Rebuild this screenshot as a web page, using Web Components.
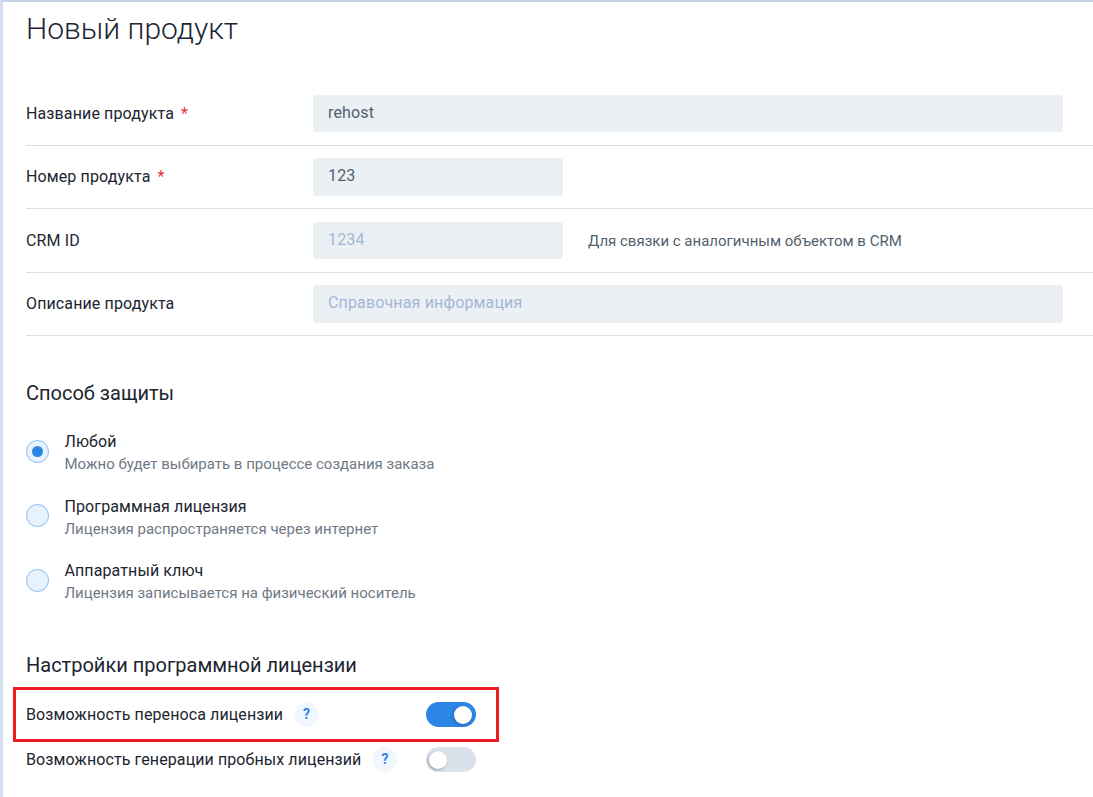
<!DOCTYPE html>
<html lang="ru">
<head>
<meta charset="utf-8">
<title>Новый продукт</title>
<style>
  html, body { margin: 0; height: 100%; }
  body { font-family: Roboto, "Liberation Sans", sans-serif; color: #1c2530; overflow: hidden; background: #fff; }
</style>
</head>
<body>
<product-page>
  <form-field label="Название продукта" required value="rehost"></form-field>
  <form-field label="Номер продукта" required value="123" short></form-field>
  <form-field label="CRM ID" placeholder="1234" short hint="Для связки с аналогичным объектом в CRM"></form-field>
  <form-field label="Описание продукта" placeholder="Справочная информация"></form-field>

  <section-title style="margin-top:43.25px">Способ защиты</section-title>
  <radio-option checked title-text="Любой" note="Можно будет выбирать в процессе создания заказа" style="margin-top:24.5px"></radio-option>
  <radio-option title-text="Программная лицензия" note="Лицензия распространяется через интернет" style="margin-top:19.5px"></radio-option>
  <radio-option title-text="Аппаратный ключ" note="Лицензия записывается на физический носитель" style="margin-top:19.5px"></radio-option>

  <section-title style="margin-top:47.5px">Настройки программной лицензии</section-title>
  <toggle-row on marked style="margin-top:24.5px">Возможность переноса лицензии</toggle-row>
  <toggle-row style="margin-top:20px">Возможность генерации пробных лицензий</toggle-row>
</product-page>

<script>
;(function () {
  const pageTemplate = document.createElement('template')
  pageTemplate.innerHTML = `
<style>
  :host {
    display: block;
    box-sizing: border-box;
    height: 797px;
    border-top: 2px solid #c6d1e4;
    border-left: 3px solid #d3deef;
    padding-left: 23px;
  }
  h1 {
    margin: 0;
    padding-top: 8px;
    height: 80.25px;
    box-sizing: border-box;
    font: 300 30px/38px Roboto, sans-serif;
    color: #1c2530;
  }
</style>
<h1>Новый продукт</h1>
<slot></slot>`

  class ProductPage extends HTMLElement {
    constructor () {
      super()
      this.attachShadow({ mode: 'open' })
      this.shadowRoot.appendChild(pageTemplate.content.cloneNode(true))
    }
  }

  const fieldTemplate = document.createElement('template')
  fieldTemplate.innerHTML = `
<style>
  :host {
    display: flex;
    align-items: center;
    box-sizing: border-box;
    height: 63.5px;
    padding: 12.5px 0;
    border-bottom: 1px solid #d9dfe8;
    font-size: 16px;
  }
  .label { width: 287px; flex: none; margin-bottom: 1px; color: #1c2530; letter-spacing: 0.12px; }
  .star { color: #f0313f; margin-left: 3px; }
  .input {
    box-sizing: border-box;
    width: 750px;
    height: 37.5px;
    line-height: 35px;
    padding: 0 15px;
    border-radius: 3px;
    background: #ebf0f4;
    color: #535f6e;
    letter-spacing: 0.15px;
  }
  .input.short { width: 250px; }
  .input.empty { color: #a5b7d6; }
  .hint { margin-left: 25px; font-size: 15px; color: #535f6e; }
</style>
<div class="label"></div>
<div class="input"></div>
<div class="hint"></div>`

  class FormField extends HTMLElement {
    constructor () {
      super()
      this.attachShadow({ mode: 'open' })
      this.shadowRoot.appendChild(fieldTemplate.content.cloneNode(true))
    }

    connectedCallback () {
      const root = this.shadowRoot
      const label = root.querySelector('.label')
      const input = root.querySelector('.input')
      label.textContent = this.getAttribute('label')
      if (this.hasAttribute('required')) {
        const star = document.createElement('span')
        star.className = 'star'
        star.textContent = ' *'
        label.appendChild(star)
      }
      const value = this.getAttribute('value')
      input.textContent = value || this.getAttribute('placeholder')
      input.classList.toggle('empty', !value)
      input.classList.toggle('short', this.hasAttribute('short'))
      const hint = root.querySelector('.hint')
      if (this.hasAttribute('hint')) hint.textContent = this.getAttribute('hint')
      else hint.remove()
    }
  }

  const titleTemplate = document.createElement('template')
  titleTemplate.innerHTML = `
<style>
  :host { display: block; font: 400 20px/26px Roboto, sans-serif; color: #1c2530; }
</style>
<slot></slot>`

  class SectionTitle extends HTMLElement {
    constructor () {
      super()
      this.attachShadow({ mode: 'open' })
      this.shadowRoot.appendChild(titleTemplate.content.cloneNode(true))
    }
  }

  const radioTemplate = document.createElement('template')
  radioTemplate.innerHTML = `
<style>
  :host { display: flex; align-items: flex-start; height: 45px; }
  .mark {
    box-sizing: border-box;
    flex: none;
    width: 23px;
    height: 23px;
    margin: 9.5px 15.5px 0 0;
    border: 1px solid #86bcf5;
    border-radius: 50%;
    background: #e8f2fd;
    display: flex;
    align-items: center;
    justify-content: center;
  }
  :host([checked]) .mark::after {
    content: '';
    width: 11px;
    height: 11px;
    border-radius: 50%;
    background: #2b85e4;
  }
  .copy { padding-top: 1px; }
  .title { font-size: 16px; line-height: 22px; color: #1c2530; letter-spacing: 0.1px; }
  .note { font-size: 15px; line-height: 23px; color: #6f7986; }
</style>
<div class="mark"></div>
<div class="copy">
  <div class="title"></div>
  <div class="note"></div>
</div>`

  class RadioOption extends HTMLElement {
    constructor () {
      super()
      this.attachShadow({ mode: 'open' })
      this.shadowRoot.appendChild(radioTemplate.content.cloneNode(true))
    }

    connectedCallback () {
      this.shadowRoot.querySelector('.title').textContent = this.getAttribute('title-text')
      this.shadowRoot.querySelector('.note').textContent = this.getAttribute('note')
    }
  }

  const toggleTemplate = document.createElement('template')
  toggleTemplate.innerHTML = `
<style>
  :host { display: flex; align-items: center; position: relative; width: 450px; height: 25px; font-size: 16px; color: #1c2530; letter-spacing: 0.1px; }
  .help {
    box-sizing: border-box;
    flex: none;
    width: 25px;
    height: 25px;
    margin-left: 11px;
    border-radius: 50%;
    background: #f1f7fe;
    color: #2b85e4;
    font-size: 14px;
    font-weight: 700;
    line-height: 25px;
    text-align: center;
  }
  .switch {
    position: absolute;
    left: 400px;
    top: 0;
    width: 50px;
    height: 25px;
    border-radius: 13px;
    background: #dbe1ea;
  }
  .knob {
    position: absolute;
    left: 3px;
    top: 4px;
    width: 18px;
    height: 18px;
    border-radius: 50%;
    background: #fff;
    box-shadow: -1px 1px 3px rgba(60, 70, 85, .45);
  }
  :host([on]) .switch { background: #2b85e4; }
  :host([on]) .knob { left: 28px; box-shadow: -1px 1px 3px rgba(20, 60, 110, .35); }
  .frame {
    display: none;
    position: absolute;
    left: -13px;
    top: -15px;
    width: 486px;
    height: 55px;
    box-sizing: border-box;
    border: 3px solid #ed1c24;
    pointer-events: none;
  }
  :host([marked]) .frame { display: block; }
</style>
<span class="text"><slot></slot></span>
<span class="help">?</span>
<span class="switch"><span class="knob"></span></span>
<span class="frame"></span>`

  class ToggleRow extends HTMLElement {
    constructor () {
      super()
      this.attachShadow({ mode: 'open' })
      this.shadowRoot.appendChild(toggleTemplate.content.cloneNode(true))
    }
  }

  customElements.define('product-page', ProductPage)
  customElements.define('form-field', FormField)
  customElements.define('section-title', SectionTitle)
  customElements.define('radio-option', RadioOption)
  customElements.define('toggle-row', ToggleRow)
})()
</script>
</body>
</html>
